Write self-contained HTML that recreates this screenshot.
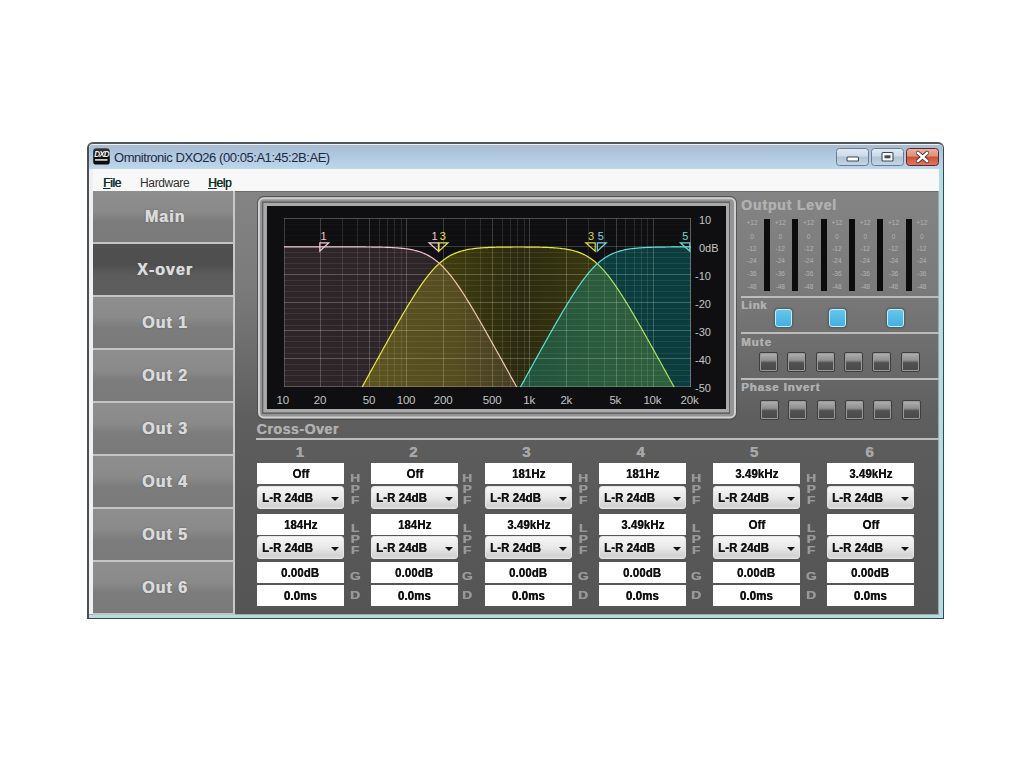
<!DOCTYPE html><html><head><meta charset="utf-8"><style>
*{margin:0;padding:0;box-sizing:border-box}
html,body{width:1024px;height:768px;overflow:hidden;background:#fff;font-family:"Liberation Sans", sans-serif}
.a{position:absolute}
.tab{position:absolute;left:93px;width:142px;height:53px;border-bottom:2px solid #c4c4c4;border-right:2px solid #c8c8c8;
 background:linear-gradient(#8e8e8e 0%,#8a8a8a 40%,#7c7c7c 60%,#7a7a7a 100%);color:#dadada;font-weight:bold;font-size:16px;letter-spacing:1.05px;text-indent:4px;text-align:center;line-height:51px;text-shadow:0.5px 0 0 #dadada,0 0 2px #555}
.tab.sel{background:linear-gradient(#505050 0%,#4e4e4e 40%,#5c5c5c 60%,#5e5e5e 100%);color:#dcdcdc}
.box{position:absolute;width:87px;height:21px;background:#fff;color:#111;font-weight:bold;font-size:12px;text-align:center;line-height:23px}
.box b,.dd b{display:inline-block;transform:scaleX(0.95);letter-spacing:0.12px;font-weight:bold;text-shadow:0.35px 0 0 #151515}
.dd b{transform-origin:0 50%}
.dd{position:absolute;width:87px;height:23px;background:linear-gradient(#f6f6f6,#e8e8e8 50%,#d2d2d2 90%,#dcdcdc);border:1px solid #e6e6e6;border-radius:3px;color:#111;font-weight:bold;font-size:12px;line-height:22px;padding-left:4px}
.dd i{position:absolute;right:4px;top:10px;width:0;height:0;border-left:4.5px solid transparent;border-right:4.5px solid transparent;border-top:4.5px solid #111}
.lt{position:absolute;width:14px;color:#989898;font-weight:bold;font-size:11px;line-height:10.9px;text-align:center;transform:scaleX(1.25);text-shadow:0.4px 0 0 #989898}
.num{position:absolute;width:40px;color:#a8a8a8;font-weight:bold;font-size:15px;text-align:center;text-shadow:0.5px 0 0 #a8a8a8}
.hdr{position:absolute;color:#b0b0b0;font-weight:bold;text-shadow:0.5px 0 0 #b0b0b0}
.sep{position:absolute;height:2px;background:#bcbcbc}
.mb{position:absolute;width:19px;height:20px;border:1px solid #3e3e3e;border-radius:2px;box-shadow:inset 0 0 0 1px #9a9a9a;background:linear-gradient(#b0b0b0,#909090 40%,#505050 55%,#4a4a4a)}
.lb{position:absolute;width:17px;height:18px;border:1.5px solid #c4ecfa;border-radius:3px;background:linear-gradient(#66c6ec,#50b8e4 60%,#44b0e0);box-shadow:0 0 2px 1px #4a5c66}
</style></head><body><div class="a" style="left:87px;top:142px;width:857px;height:477px;border:1px solid #2e4a52;border-left:2px solid #4a5054;border-top:2px solid #50565c;border-radius:6px 6px 0 0;background:#eef2f6"></div><div class="a" style="left:89px;top:145px;width:854px;height:24px;border-radius:4px 4px 0 0;background:linear-gradient(#a8bcd2,#b4cde4 60%,#bcd6ea)"></div><div class="a" style="left:939px;top:169px;width:4px;height:449px;background:#b4dde2"></div><div class="a" style="left:89px;top:615px;width:854px;height:3px;background:#b4dde2"></div><div class="a" style="left:89px;top:169px;width:4px;height:446px;background:#f0f0f0"></div><div class="a" style="left:93px;top:169px;width:846px;height:22px;background:#f9f8f8"></div><svg class="a" style="left:90px;top:146px" width="24" height="22"><defs><linearGradient id="ig" x1="0" y1="0" x2="0" y2="1"><stop offset="0" stop-color="#3a3c3a"/><stop offset="0.35" stop-color="#141414"/><stop offset="1" stop-color="#0a0a0a"/></linearGradient></defs><rect x="3.2" y="2.3" width="16.6" height="16.3" rx="3.2" fill="url(#ig)"/><text x="11.6" y="11.4" fill="#f4f4f4" font-size="8.2" font-weight="bold" font-style="italic" text-anchor="middle" letter-spacing="-0.9" font-family="Liberation Sans, sans-serif">DXD</text><rect x="5" y="13" width="12.5" height="1.8" fill="#e8e8e8" opacity="0.85"/></svg><div class="a" style="left:114px;top:150px;font-size:13px;letter-spacing:-0.45px;color:#1c2844;white-space:nowrap">Omnitronic DXO26 (00:05:A1:45:2B:AE)</div><svg class="a" style="left:830px;top:144px" width="114" height="26">
<defs>
<linearGradient id="bb" x1="0" y1="0" x2="0" y2="1"><stop offset="0" stop-color="#e2ebf4"/><stop offset="0.45" stop-color="#ccdae8"/><stop offset="0.5" stop-color="#afc3d8"/><stop offset="1" stop-color="#c6d6e6"/></linearGradient>
<linearGradient id="bc" x1="0" y1="0" x2="0" y2="1"><stop offset="0" stop-color="#eeb0a0"/><stop offset="0.45" stop-color="#e09078"/><stop offset="0.5" stop-color="#cc5038"/><stop offset="1" stop-color="#e07a60"/></linearGradient>
</defs>
<rect x="6.5" y="4.5" width="32" height="17" rx="3" fill="url(#bb)" stroke="#6c7c8e"/>
<rect x="41.5" y="4.5" width="32" height="17" rx="3" fill="url(#bb)" stroke="#6c7c8e"/>
<rect x="76.5" y="4.5" width="32" height="17" rx="3" fill="url(#bc)" stroke="#5a2a30"/>
<rect x="17" y="13" width="11.5" height="4" rx="1" fill="#fff" stroke="#3c4c5c" stroke-width="1.1"/>
<rect x="52" y="8.5" width="11" height="8.5" rx="1" fill="#fff" stroke="#3c4c5c" stroke-width="1.1"/>
<rect x="54.5" y="11.3" width="6" height="3" fill="#3c4c5c"/>
<path d="M88,9 L97,17 M97,9 L88,17" stroke="#3a2020" stroke-width="4.2" stroke-linecap="round"/>
<path d="M88,9 L97,17 M97,9 L88,17" stroke="#fff" stroke-width="2.6" stroke-linecap="square"/>
</svg><div class="a" style="left:103px;top:176px;font-size:12px;letter-spacing:-0.35px;color:#10302a;text-shadow:0.4px 0 0 #10302a;white-space:nowrap"><span style="text-decoration:underline">F</span>ile</div><div class="a" style="left:140px;top:176px;font-size:12px;letter-spacing:-0.35px;color:#303030;white-space:nowrap">Hardware</div><div class="a" style="left:208px;top:176px;font-size:12px;letter-spacing:-0.35px;color:#10302a;text-shadow:0.4px 0 0 #10302a;white-space:nowrap"><span style="text-decoration:underline">H</span>elp</div><div class="a" style="left:93px;top:191px;width:846px;height:423px;background:linear-gradient(#848484 0%,#7a7a7a 23%,#5e5e5e 54%,#585858 75%,#555 100%);border-top:1px solid #6a6a6a"></div><div class="a" style="left:938px;top:191px;width:1px;height:423px;background:#a4a4a4"></div><div class="a" style="left:89px;top:614px;width:850px;height:1px;background:#a4a8a8"></div><div class="tab" style="top:191px">Main</div><div class="tab sel" style="top:244px">X-over</div><div class="tab" style="top:297px">Out 1</div><div class="tab" style="top:350px">Out 2</div><div class="tab" style="top:403px">Out 3</div><div class="tab" style="top:456px">Out 4</div><div class="tab" style="top:509px">Out 5</div><div class="tab" style="top:562px">Out 6</div><svg class="a" style="left:0;top:0" width="1024" height="768"><rect x="257.5" y="196.5" width="479" height="223" rx="6" fill="none" stroke="#4a4a4a" stroke-opacity="0.8"/><rect x="259" y="198.3" width="476" height="219.2" rx="5" fill="#949494" stroke="#d0d0d0" stroke-width="2"/><rect x="262.75" y="202.25" width="466.5" height="211" fill="none" stroke="#626262" stroke-width="1.5"/><rect x="265" y="204.5" width="462.5" height="206" fill="none" stroke="#aaaaaa" stroke-width="3"/><rect x="267" y="206" width="459" height="203" fill="#0f0f11"/><defs><linearGradient id="gy" gradientUnits="userSpaceOnUse" x1="362" y1="0" x2="675" y2="0"><stop offset="0" stop-color="#e8e000" stop-opacity="0.25"/><stop offset="0.3" stop-color="#e8e000" stop-opacity="0.21"/><stop offset="0.5" stop-color="#e8e000" stop-opacity="0.13"/><stop offset="0.72" stop-color="#e8e000" stop-opacity="0.19"/><stop offset="1" stop-color="#e8e000" stop-opacity="0.22"/></linearGradient><clipPath id="cu"><path d="M284.00,246.88 L285.36,246.88 L286.71,246.88 L288.07,246.88 L289.42,246.88 L290.78,246.88 L292.13,246.88 L293.49,246.88 L294.84,246.88 L296.20,246.88 L297.56,246.88 L298.91,246.88 L300.27,246.88 L301.62,246.88 L302.98,246.88 L304.33,246.88 L305.69,246.88 L307.05,246.88 L308.40,246.88 L309.76,246.88 L311.11,246.88 L312.47,246.88 L313.82,246.88 L315.18,246.88 L316.53,246.88 L317.89,246.88 L319.25,246.88 L320.60,246.88 L321.96,246.88 L323.31,246.88 L324.67,246.88 L326.02,246.88 L327.38,246.89 L328.74,246.89 L330.09,246.89 L331.45,246.89 L332.80,246.89 L334.16,246.89 L335.51,246.89 L336.87,246.89 L338.22,246.89 L339.58,246.89 L340.94,246.90 L342.29,246.90 L343.65,246.90 L345.00,246.90 L346.36,246.90 L347.71,246.90 L349.07,246.91 L350.43,246.91 L351.78,246.91 L353.14,246.92 L354.49,246.92 L355.85,246.93 L357.20,246.93 L358.56,246.94 L359.91,246.94 L361.27,246.95 L362.63,246.96 L363.98,246.96 L365.34,246.97 L366.69,246.98 L368.05,246.99 L369.40,247.01 L370.76,247.02 L372.12,247.03 L373.47,247.05 L374.83,247.07 L376.18,247.09 L377.54,247.11 L378.89,247.14 L380.25,247.16 L381.60,247.19 L382.96,247.23 L384.32,247.26 L385.67,247.30 L387.03,247.35 L388.38,247.40 L389.74,247.45 L391.09,247.51 L392.45,247.58 L393.81,247.65 L395.16,247.73 L396.52,247.82 L397.87,247.92 L399.23,248.03 L400.58,248.14 L401.94,248.28 L403.29,248.42 L404.65,248.58 L406.01,248.75 L407.36,248.94 L408.72,249.15 L410.07,249.38 L411.43,249.64 L412.78,249.91 L414.14,250.22 L415.50,250.55 L416.85,250.91 L418.21,251.30 L419.56,251.73 L420.92,252.19 L422.27,252.69 L423.63,253.24 L424.98,253.83 L426.34,254.47 L427.70,255.15 L429.05,255.89 L430.41,256.68 L431.76,257.53 L433.12,258.43 L434.47,259.39 L435.83,260.41 L437.19,261.50 L438.54,262.64 L439.90,262.93 L441.25,261.77 L442.61,260.68 L443.96,259.64 L445.32,258.66 L446.67,257.74 L448.03,256.88 L449.39,256.08 L450.74,255.33 L452.10,254.63 L453.45,253.98 L454.81,253.38 L456.16,252.83 L457.52,252.31 L458.88,251.84 L460.23,251.40 L461.59,251.00 L462.94,250.63 L464.30,250.30 L465.65,249.99 L467.01,249.70 L468.36,249.45 L469.72,249.21 L471.08,249.00 L472.43,248.80 L473.79,248.62 L475.14,248.46 L476.50,248.31 L477.85,248.18 L479.21,248.06 L480.57,247.95 L481.92,247.85 L483.28,247.76 L484.63,247.67 L485.99,247.60 L487.34,247.53 L488.70,247.47 L490.05,247.42 L491.41,247.37 L492.77,247.32 L494.12,247.28 L495.48,247.25 L496.83,247.21 L498.19,247.18 L499.54,247.16 L500.90,247.13 L502.26,247.11 L503.61,247.10 L504.97,247.08 L506.32,247.07 L507.68,247.05 L509.03,247.04 L510.39,247.03 L511.74,247.03 L513.10,247.02 L514.46,247.02 L515.81,247.01 L517.17,247.01 L518.52,247.01 L519.88,247.01 L521.23,247.01 L522.59,247.02 L523.95,247.02 L525.30,247.03 L526.66,247.04 L528.01,247.05 L529.37,247.06 L530.72,247.07 L532.08,247.09 L533.43,247.11 L534.79,247.13 L536.15,247.15 L537.50,247.17 L538.86,247.20 L540.21,247.23 L541.57,247.27 L542.92,247.31 L544.28,247.35 L545.64,247.40 L546.99,247.45 L548.35,247.51 L549.70,247.57 L551.06,247.64 L552.41,247.72 L553.77,247.81 L555.12,247.91 L556.48,248.01 L557.84,248.13 L559.19,248.26 L560.55,248.40 L561.90,248.56 L563.26,248.73 L564.61,248.92 L565.97,249.12 L567.33,249.35 L568.68,249.60 L570.04,249.87 L571.39,250.17 L572.75,250.50 L574.10,250.85 L575.46,251.24 L576.81,251.66 L578.17,252.12 L579.53,252.62 L580.88,253.16 L582.24,253.74 L583.59,254.37 L584.95,255.05 L586.30,255.78 L587.66,256.56 L589.02,257.40 L590.37,258.29 L591.73,259.25 L593.08,260.26 L594.44,261.34 L595.79,262.47 L597.15,263.67 L598.50,262.69 L599.86,261.54 L601.22,260.46 L602.57,259.43 L603.93,258.47 L605.28,257.56 L606.64,256.71 L607.99,255.92 L609.35,255.18 L610.71,254.49 L612.06,253.86 L613.42,253.26 L614.77,252.72 L616.13,252.21 L617.48,251.75 L618.84,251.32 L620.19,250.92 L621.55,250.56 L622.91,250.23 L624.26,249.93 L625.62,249.65 L626.97,249.39 L628.33,249.16 L629.68,248.95 L631.04,248.76 L632.40,248.58 L633.75,248.43 L635.11,248.28 L636.46,248.15 L637.82,248.03 L639.17,247.92 L640.53,247.82 L641.88,247.73 L643.24,247.65 L644.60,247.58 L645.95,247.51 L647.31,247.45 L648.66,247.40 L650.02,247.35 L651.37,247.30 L652.73,247.26 L654.09,247.23 L655.44,247.19 L656.80,247.16 L658.15,247.14 L659.51,247.11 L660.86,247.09 L662.22,247.07 L663.57,247.05 L664.93,247.03 L666.29,247.02 L667.64,247.01 L669.00,246.99 L670.35,246.98 L671.71,246.97 L673.06,246.96 L674.42,246.96 L675.78,246.95 L677.13,246.94 L678.49,246.94 L679.84,246.93 L681.20,246.93 L682.55,246.92 L683.91,246.92 L685.26,246.91 L686.62,246.91 L687.98,246.91 L689.33,246.91 L690.69,246.90 L691,386.9 L284,386.9 Z"/></clipPath></defs><path d="M284.00,246.88 L285.36,246.88 L286.71,246.88 L288.07,246.88 L289.42,246.88 L290.78,246.88 L292.13,246.88 L293.49,246.88 L294.84,246.88 L296.20,246.88 L297.56,246.88 L298.91,246.88 L300.27,246.88 L301.62,246.88 L302.98,246.88 L304.33,246.88 L305.69,246.88 L307.05,246.88 L308.40,246.88 L309.76,246.88 L311.11,246.88 L312.47,246.88 L313.82,246.88 L315.18,246.88 L316.53,246.88 L317.89,246.88 L319.25,246.88 L320.60,246.88 L321.96,246.88 L323.31,246.88 L324.67,246.88 L326.02,246.88 L327.38,246.89 L328.74,246.89 L330.09,246.89 L331.45,246.89 L332.80,246.89 L334.16,246.89 L335.51,246.89 L336.87,246.89 L338.22,246.89 L339.58,246.89 L340.94,246.90 L342.29,246.90 L343.65,246.90 L345.00,246.90 L346.36,246.90 L347.71,246.90 L349.07,246.91 L350.43,246.91 L351.78,246.91 L353.14,246.92 L354.49,246.92 L355.85,246.93 L357.20,246.93 L358.56,246.94 L359.91,246.94 L361.27,246.95 L362.63,246.96 L363.98,246.96 L365.34,246.97 L366.69,246.98 L368.05,246.99 L369.40,247.01 L370.76,247.02 L372.12,247.03 L373.47,247.05 L374.83,247.07 L376.18,247.09 L377.54,247.11 L378.89,247.14 L380.25,247.16 L381.60,247.19 L382.96,247.23 L384.32,247.26 L385.67,247.30 L387.03,247.35 L388.38,247.40 L389.74,247.45 L391.09,247.51 L392.45,247.58 L393.81,247.65 L395.16,247.73 L396.52,247.82 L397.87,247.92 L399.23,248.03 L400.58,248.14 L401.94,248.28 L403.29,248.42 L404.65,248.58 L406.01,248.75 L407.36,248.94 L408.72,249.15 L410.07,249.38 L411.43,249.64 L412.78,249.91 L414.14,250.22 L415.50,250.55 L416.85,250.91 L418.21,251.30 L419.56,251.73 L420.92,252.19 L422.27,252.69 L423.63,253.24 L424.98,253.83 L426.34,254.47 L427.70,255.15 L429.05,255.89 L430.41,256.68 L431.76,257.53 L433.12,258.43 L434.47,259.39 L435.83,260.41 L437.19,261.50 L438.54,262.64 L439.90,263.85 L441.25,265.12 L442.61,266.45 L443.96,267.85 L445.32,269.30 L446.67,270.82 L448.03,272.40 L449.39,274.03 L450.74,275.71 L452.10,277.45 L453.45,279.25 L454.81,281.09 L456.16,282.97 L457.52,284.90 L458.88,286.88 L460.23,288.89 L461.59,290.94 L462.94,293.02 L464.30,295.13 L465.65,297.28 L467.01,299.45 L468.36,301.65 L469.72,303.87 L471.08,306.11 L472.43,308.38 L473.79,310.66 L475.14,312.96 L476.50,315.27 L477.85,317.60 L479.21,319.94 L480.57,322.30 L481.92,324.66 L483.28,327.04 L484.63,329.42 L485.99,331.81 L487.34,334.21 L488.70,336.62 L490.05,339.03 L491.41,341.45 L492.77,343.87 L494.12,346.30 L495.48,348.73 L496.83,351.17 L498.19,353.61 L499.54,356.05 L500.90,358.49 L502.26,360.94 L503.61,363.39 L504.97,365.84 L506.32,368.30 L507.68,370.75 L509.03,373.21 L510.39,375.67 L511.74,378.13 L513.10,380.59 L514.46,383.05 L515.81,385.51 L516.78,386.90 L516.78,386.9 L284.00,386.9 Z" fill="#f0b0c0" fill-opacity="0.14"/><path d="M284.00,246.88 L285.36,246.88 L286.71,246.88 L288.07,246.88 L289.42,246.88 L290.78,246.88 L292.13,246.88 L293.49,246.88 L294.84,246.88 L296.20,246.88 L297.56,246.88 L298.91,246.88 L300.27,246.88 L301.62,246.88 L302.98,246.88 L304.33,246.88 L305.69,246.88 L307.05,246.88 L308.40,246.88 L309.76,246.88 L311.11,246.88 L312.47,246.88 L313.82,246.88 L315.18,246.88 L316.53,246.88 L317.89,246.88 L319.25,246.88 L320.60,246.88 L321.96,246.88 L323.31,246.88 L324.67,246.88 L326.02,246.88 L327.38,246.89 L328.74,246.89 L330.09,246.89 L331.45,246.89 L332.80,246.89 L334.16,246.89 L335.51,246.89 L336.87,246.89 L338.22,246.89 L339.58,246.89 L340.94,246.90 L342.29,246.90 L343.65,246.90 L345.00,246.90 L346.36,246.90 L347.71,246.90 L349.07,246.91 L350.43,246.91 L351.78,246.91 L353.14,246.92 L354.49,246.92 L355.85,246.93 L357.20,246.93 L358.56,246.94 L359.91,246.94 L361.27,246.95 L362.63,246.96 L363.98,246.96 L365.34,246.97 L366.69,246.98 L368.05,246.99 L369.40,247.01 L370.76,247.02 L372.12,247.03 L373.47,247.05 L374.83,247.07 L376.18,247.09 L377.54,247.11 L378.89,247.14 L380.25,247.16 L381.60,247.19 L382.96,247.23 L384.32,247.26 L385.67,247.30 L387.03,247.35 L388.38,247.40 L389.74,247.45 L391.09,247.51 L392.45,247.58 L393.81,247.65 L395.16,247.73 L396.52,247.82 L397.87,247.92 L399.23,248.03 L400.58,248.14 L401.94,248.28 L403.29,248.42 L404.65,248.58 L406.01,248.75 L407.36,248.94 L408.72,249.15 L410.07,249.38 L411.43,249.64 L412.78,249.91 L414.14,250.22 L415.50,250.55 L416.85,250.91 L418.21,251.30 L419.56,251.73 L420.92,252.19 L422.27,252.69 L423.63,253.24 L424.98,253.83 L426.34,254.47 L427.70,255.15 L429.05,255.89 L430.41,256.68 L431.76,257.53 L433.12,258.43 L434.47,259.39 L435.83,260.41 L437.19,261.50 L438.54,262.64 L439.90,263.85 L441.25,265.12 L442.61,266.45 L443.96,267.85 L445.32,269.30 L446.67,270.82 L448.03,272.40 L449.39,274.03 L450.74,275.71 L452.10,277.45 L453.45,279.25 L454.81,281.09 L456.16,282.97 L457.52,284.90 L458.88,286.88 L460.23,288.89 L461.59,290.94 L462.94,293.02 L464.30,295.13 L465.65,297.28 L467.01,299.45 L468.36,301.65 L469.72,303.87 L471.08,306.11 L472.43,308.38 L473.79,310.66 L475.14,312.96 L476.50,315.27 L477.85,317.60 L479.21,319.94 L480.57,322.30 L481.92,324.66 L483.28,327.04 L484.63,329.42 L485.99,331.81 L487.34,334.21 L488.70,336.62 L490.05,339.03 L491.41,341.45 L492.77,343.87 L494.12,346.30 L495.48,348.73 L496.83,351.17 L498.19,353.61 L499.54,356.05 L500.90,358.49 L502.26,360.94 L503.61,363.39 L504.97,365.84 L506.32,368.30 L507.68,370.75 L509.03,373.21 L510.39,375.67 L511.74,378.13 L513.10,380.59 L514.46,383.05 L515.81,385.51 L516.78,386.90" fill="none" stroke="#f4c0cc" stroke-width="1.2"/><path d="M361.99,386.90 L362.63,386.12 L363.98,383.66 L365.34,381.20 L366.69,378.73 L368.05,376.27 L369.40,373.82 L370.76,371.36 L372.12,368.90 L373.47,366.45 L374.83,363.99 L376.18,361.54 L377.54,359.10 L378.89,356.65 L380.25,354.21 L381.60,351.77 L382.96,349.33 L384.32,346.90 L385.67,344.47 L387.03,342.05 L388.38,339.63 L389.74,337.21 L391.09,334.80 L392.45,332.40 L393.81,330.01 L395.16,327.62 L396.52,325.25 L397.87,322.88 L399.23,320.52 L400.58,318.18 L401.94,315.84 L403.29,313.53 L404.65,311.22 L406.01,308.94 L407.36,306.67 L408.72,304.42 L410.07,302.19 L411.43,299.99 L412.78,297.81 L414.14,295.66 L415.50,293.54 L416.85,291.45 L418.21,289.39 L419.56,287.37 L420.92,285.39 L422.27,283.44 L423.63,281.55 L424.98,279.69 L426.34,277.89 L427.70,276.14 L429.05,274.44 L430.41,272.79 L431.76,271.20 L433.12,269.67 L434.47,268.20 L435.83,266.79 L437.19,265.44 L438.54,264.16 L439.90,262.93 L441.25,261.77 L442.61,260.68 L443.96,259.64 L445.32,258.66 L446.67,257.74 L448.03,256.88 L449.39,256.08 L450.74,255.33 L452.10,254.63 L453.45,253.98 L454.81,253.38 L456.16,252.83 L457.52,252.31 L458.88,251.84 L460.23,251.40 L461.59,251.00 L462.94,250.63 L464.30,250.30 L465.65,249.99 L467.01,249.70 L468.36,249.45 L469.72,249.21 L471.08,249.00 L472.43,248.80 L473.79,248.62 L475.14,248.46 L476.50,248.31 L477.85,248.18 L479.21,248.06 L480.57,247.95 L481.92,247.85 L483.28,247.76 L484.63,247.67 L485.99,247.60 L487.34,247.53 L488.70,247.47 L490.05,247.42 L491.41,247.37 L492.77,247.32 L494.12,247.28 L495.48,247.25 L496.83,247.21 L498.19,247.18 L499.54,247.16 L500.90,247.13 L502.26,247.11 L503.61,247.10 L504.97,247.08 L506.32,247.07 L507.68,247.05 L509.03,247.04 L510.39,247.03 L511.74,247.03 L513.10,247.02 L514.46,247.02 L515.81,247.01 L517.17,247.01 L518.52,247.01 L519.88,247.01 L521.23,247.01 L522.59,247.02 L523.95,247.02 L525.30,247.03 L526.66,247.04 L528.01,247.05 L529.37,247.06 L530.72,247.07 L532.08,247.09 L533.43,247.11 L534.79,247.13 L536.15,247.15 L537.50,247.17 L538.86,247.20 L540.21,247.23 L541.57,247.27 L542.92,247.31 L544.28,247.35 L545.64,247.40 L546.99,247.45 L548.35,247.51 L549.70,247.57 L551.06,247.64 L552.41,247.72 L553.77,247.81 L555.12,247.91 L556.48,248.01 L557.84,248.13 L559.19,248.26 L560.55,248.40 L561.90,248.56 L563.26,248.73 L564.61,248.92 L565.97,249.12 L567.33,249.35 L568.68,249.60 L570.04,249.87 L571.39,250.17 L572.75,250.50 L574.10,250.85 L575.46,251.24 L576.81,251.66 L578.17,252.12 L579.53,252.62 L580.88,253.16 L582.24,253.74 L583.59,254.37 L584.95,255.05 L586.30,255.78 L587.66,256.56 L589.02,257.40 L590.37,258.29 L591.73,259.25 L593.08,260.26 L594.44,261.34 L595.79,262.47 L597.15,263.67 L598.50,264.93 L599.86,266.26 L601.22,267.64 L602.57,269.09 L603.93,270.60 L605.28,272.16 L606.64,273.79 L607.99,275.46 L609.35,277.20 L610.71,278.98 L612.06,280.81 L613.42,282.69 L614.77,284.62 L616.13,286.58 L617.48,288.59 L618.84,290.63 L620.19,292.71 L621.55,294.82 L622.91,296.96 L624.26,299.13 L625.62,301.32 L626.97,303.54 L628.33,305.78 L629.68,308.04 L631.04,310.32 L632.40,312.62 L633.75,314.93 L635.11,317.26 L636.46,319.60 L637.82,321.95 L639.17,324.32 L640.53,326.69 L641.88,329.07 L643.24,331.46 L644.60,333.86 L645.95,336.27 L647.31,338.68 L648.66,341.09 L650.02,343.52 L651.37,345.94 L652.73,348.38 L654.09,350.81 L655.44,353.25 L656.80,355.69 L658.15,358.14 L659.51,360.58 L660.86,363.03 L662.22,365.48 L663.57,367.94 L664.93,370.39 L666.29,372.85 L667.64,375.31 L669.00,377.77 L670.35,380.23 L671.71,382.69 L673.06,385.15 L674.23,386.90 L674.23,386.9 L361.99,386.9 Z" fill="url(#gy)"/><path d="M361.99,386.90 L362.63,386.12 L363.98,383.66 L365.34,381.20 L366.69,378.73 L368.05,376.27 L369.40,373.82 L370.76,371.36 L372.12,368.90 L373.47,366.45 L374.83,363.99 L376.18,361.54 L377.54,359.10 L378.89,356.65 L380.25,354.21 L381.60,351.77 L382.96,349.33 L384.32,346.90 L385.67,344.47 L387.03,342.05 L388.38,339.63 L389.74,337.21 L391.09,334.80 L392.45,332.40 L393.81,330.01 L395.16,327.62 L396.52,325.25 L397.87,322.88 L399.23,320.52 L400.58,318.18 L401.94,315.84 L403.29,313.53 L404.65,311.22 L406.01,308.94 L407.36,306.67 L408.72,304.42 L410.07,302.19 L411.43,299.99 L412.78,297.81 L414.14,295.66 L415.50,293.54 L416.85,291.45 L418.21,289.39 L419.56,287.37 L420.92,285.39 L422.27,283.44 L423.63,281.55 L424.98,279.69 L426.34,277.89 L427.70,276.14 L429.05,274.44 L430.41,272.79 L431.76,271.20 L433.12,269.67 L434.47,268.20 L435.83,266.79 L437.19,265.44 L438.54,264.16 L439.90,262.93 L441.25,261.77 L442.61,260.68 L443.96,259.64 L445.32,258.66 L446.67,257.74 L448.03,256.88 L449.39,256.08 L450.74,255.33 L452.10,254.63 L453.45,253.98 L454.81,253.38 L456.16,252.83 L457.52,252.31 L458.88,251.84 L460.23,251.40 L461.59,251.00 L462.94,250.63 L464.30,250.30 L465.65,249.99 L467.01,249.70 L468.36,249.45 L469.72,249.21 L471.08,249.00 L472.43,248.80 L473.79,248.62 L475.14,248.46 L476.50,248.31 L477.85,248.18 L479.21,248.06 L480.57,247.95 L481.92,247.85 L483.28,247.76 L484.63,247.67 L485.99,247.60 L487.34,247.53 L488.70,247.47 L490.05,247.42 L491.41,247.37 L492.77,247.32 L494.12,247.28 L495.48,247.25 L496.83,247.21 L498.19,247.18 L499.54,247.16 L500.90,247.13 L502.26,247.11 L503.61,247.10 L504.97,247.08 L506.32,247.07 L507.68,247.05 L509.03,247.04 L510.39,247.03 L511.74,247.03 L513.10,247.02 L514.46,247.02 L515.81,247.01 L517.17,247.01 L518.52,247.01 L519.88,247.01 L521.23,247.01 L522.59,247.02 L523.95,247.02 L525.30,247.03 L526.66,247.04 L528.01,247.05 L529.37,247.06 L530.72,247.07 L532.08,247.09 L533.43,247.11 L534.79,247.13 L536.15,247.15 L537.50,247.17 L538.86,247.20 L540.21,247.23 L541.57,247.27 L542.92,247.31 L544.28,247.35 L545.64,247.40 L546.99,247.45 L548.35,247.51 L549.70,247.57 L551.06,247.64 L552.41,247.72 L553.77,247.81 L555.12,247.91 L556.48,248.01 L557.84,248.13 L559.19,248.26 L560.55,248.40 L561.90,248.56 L563.26,248.73 L564.61,248.92 L565.97,249.12 L567.33,249.35 L568.68,249.60 L570.04,249.87 L571.39,250.17 L572.75,250.50 L574.10,250.85 L575.46,251.24 L576.81,251.66 L578.17,252.12 L579.53,252.62 L580.88,253.16 L582.24,253.74 L583.59,254.37 L584.95,255.05 L586.30,255.78 L587.66,256.56 L589.02,257.40 L590.37,258.29 L591.73,259.25 L593.08,260.26 L594.44,261.34 L595.79,262.47 L597.15,263.67 L598.50,264.93 L599.86,266.26 L601.22,267.64 L602.57,269.09 L603.93,270.60 L605.28,272.16 L606.64,273.79 L607.99,275.46 L609.35,277.20 L610.71,278.98 L612.06,280.81 L613.42,282.69 L614.77,284.62 L616.13,286.58 L617.48,288.59 L618.84,290.63 L620.19,292.71 L621.55,294.82 L622.91,296.96 L624.26,299.13 L625.62,301.32 L626.97,303.54 L628.33,305.78 L629.68,308.04 L631.04,310.32 L632.40,312.62 L633.75,314.93 L635.11,317.26 L636.46,319.60 L637.82,321.95 L639.17,324.32 L640.53,326.69 L641.88,329.07 L643.24,331.46 L644.60,333.86 L645.95,336.27 L647.31,338.68 L648.66,341.09 L650.02,343.52 L651.37,345.94 L652.73,348.38 L654.09,350.81 L655.44,353.25 L656.80,355.69 L658.15,358.14 L659.51,360.58 L660.86,363.03 L662.22,365.48 L663.57,367.94 L664.93,370.39 L666.29,372.85 L667.64,375.31 L669.00,377.77 L670.35,380.23 L671.71,382.69 L673.06,385.15 L674.23,386.90" fill="none" stroke="#e8e838" stroke-width="1.2"/><path d="M520.32,386.90 L521.23,385.62 L522.59,383.15 L523.95,380.69 L525.30,378.23 L526.66,375.77 L528.01,373.31 L529.37,370.85 L530.72,368.40 L532.08,365.94 L533.43,363.49 L534.79,361.04 L536.15,358.59 L537.50,356.15 L538.86,353.71 L540.21,351.27 L541.57,348.83 L542.92,346.40 L544.28,343.97 L545.64,341.55 L546.99,339.13 L548.35,336.72 L549.70,334.31 L551.06,331.91 L552.41,329.52 L553.77,327.14 L555.12,324.76 L556.48,322.39 L557.84,320.04 L559.19,317.70 L560.55,315.37 L561.90,313.05 L563.26,310.75 L564.61,308.47 L565.97,306.21 L567.33,303.96 L568.68,301.74 L570.04,299.54 L571.39,297.37 L572.75,295.22 L574.10,293.10 L575.46,291.02 L576.81,288.97 L578.17,286.96 L579.53,284.98 L580.88,283.05 L582.24,281.16 L583.59,279.32 L584.95,277.53 L586.30,275.79 L587.66,274.10 L589.02,272.46 L590.37,270.88 L591.73,269.37 L593.08,267.91 L594.44,266.51 L595.79,265.18 L597.15,263.90 L598.50,262.69 L599.86,261.54 L601.22,260.46 L602.57,259.43 L603.93,258.47 L605.28,257.56 L606.64,256.71 L607.99,255.92 L609.35,255.18 L610.71,254.49 L612.06,253.86 L613.42,253.26 L614.77,252.72 L616.13,252.21 L617.48,251.75 L618.84,251.32 L620.19,250.92 L621.55,250.56 L622.91,250.23 L624.26,249.93 L625.62,249.65 L626.97,249.39 L628.33,249.16 L629.68,248.95 L631.04,248.76 L632.40,248.58 L633.75,248.43 L635.11,248.28 L636.46,248.15 L637.82,248.03 L639.17,247.92 L640.53,247.82 L641.88,247.73 L643.24,247.65 L644.60,247.58 L645.95,247.51 L647.31,247.45 L648.66,247.40 L650.02,247.35 L651.37,247.30 L652.73,247.26 L654.09,247.23 L655.44,247.19 L656.80,247.16 L658.15,247.14 L659.51,247.11 L660.86,247.09 L662.22,247.07 L663.57,247.05 L664.93,247.03 L666.29,247.02 L667.64,247.01 L669.00,246.99 L670.35,246.98 L671.71,246.97 L673.06,246.96 L674.42,246.96 L675.78,246.95 L677.13,246.94 L678.49,246.94 L679.84,246.93 L681.20,246.93 L682.55,246.92 L683.91,246.92 L685.26,246.91 L686.62,246.91 L687.98,246.91 L689.33,246.91 L690.69,246.90 L690.69,386.9 L520.32,386.9 Z" fill="#00c8c8" fill-opacity="0.25"/><path d="M520.32,386.90 L521.23,385.62 L522.59,383.15 L523.95,380.69 L525.30,378.23 L526.66,375.77 L528.01,373.31 L529.37,370.85 L530.72,368.40 L532.08,365.94 L533.43,363.49 L534.79,361.04 L536.15,358.59 L537.50,356.15 L538.86,353.71 L540.21,351.27 L541.57,348.83 L542.92,346.40 L544.28,343.97 L545.64,341.55 L546.99,339.13 L548.35,336.72 L549.70,334.31 L551.06,331.91 L552.41,329.52 L553.77,327.14 L555.12,324.76 L556.48,322.39 L557.84,320.04 L559.19,317.70 L560.55,315.37 L561.90,313.05 L563.26,310.75 L564.61,308.47 L565.97,306.21 L567.33,303.96 L568.68,301.74 L570.04,299.54 L571.39,297.37 L572.75,295.22 L574.10,293.10 L575.46,291.02 L576.81,288.97 L578.17,286.96 L579.53,284.98 L580.88,283.05 L582.24,281.16 L583.59,279.32 L584.95,277.53 L586.30,275.79 L587.66,274.10 L589.02,272.46 L590.37,270.88 L591.73,269.37 L593.08,267.91 L594.44,266.51 L595.79,265.18 L597.15,263.90 L598.50,262.69 L599.86,261.54 L601.22,260.46 L602.57,259.43 L603.93,258.47 L605.28,257.56 L606.64,256.71 L607.99,255.92 L609.35,255.18 L610.71,254.49 L612.06,253.86 L613.42,253.26 L614.77,252.72 L616.13,252.21 L617.48,251.75 L618.84,251.32 L620.19,250.92 L621.55,250.56 L622.91,250.23 L624.26,249.93 L625.62,249.65 L626.97,249.39 L628.33,249.16 L629.68,248.95 L631.04,248.76 L632.40,248.58 L633.75,248.43 L635.11,248.28 L636.46,248.15 L637.82,248.03 L639.17,247.92 L640.53,247.82 L641.88,247.73 L643.24,247.65 L644.60,247.58 L645.95,247.51 L647.31,247.45 L648.66,247.40 L650.02,247.35 L651.37,247.30 L652.73,247.26 L654.09,247.23 L655.44,247.19 L656.80,247.16 L658.15,247.14 L659.51,247.11 L660.86,247.09 L662.22,247.07 L663.57,247.05 L664.93,247.03 L666.29,247.02 L667.64,247.01 L669.00,246.99 L670.35,246.98 L671.71,246.97 L673.06,246.96 L674.42,246.96 L675.78,246.95 L677.13,246.94 L678.49,246.94 L679.84,246.93 L681.20,246.93 L682.55,246.92 L683.91,246.92 L685.26,246.91 L686.62,246.91 L687.98,246.91 L689.33,246.91 L690.69,246.90" fill="none" stroke="#58e0d8" stroke-width="1.2"/><g><line x1="284.5" y1="218.4" x2="284.5" y2="386.9" stroke="#fff" stroke-opacity="0.19"/><line x1="320.5" y1="218.4" x2="320.5" y2="386.9" stroke="#fff" stroke-opacity="0.19"/><line x1="342.5" y1="218.4" x2="342.5" y2="386.9" stroke="#fff" stroke-opacity="0.11"/><line x1="357.5" y1="218.4" x2="357.5" y2="386.9" stroke="#fff" stroke-opacity="0.11"/><line x1="369.5" y1="218.4" x2="369.5" y2="386.9" stroke="#fff" stroke-opacity="0.19"/><line x1="379.5" y1="218.4" x2="379.5" y2="386.9" stroke="#fff" stroke-opacity="0.11"/><line x1="387.5" y1="218.4" x2="387.5" y2="386.9" stroke="#fff" stroke-opacity="0.11"/><line x1="394.5" y1="218.4" x2="394.5" y2="386.9" stroke="#fff" stroke-opacity="0.11"/><line x1="401.5" y1="218.4" x2="401.5" y2="386.9" stroke="#fff" stroke-opacity="0.11"/><line x1="406.5" y1="218.4" x2="406.5" y2="386.9" stroke="#fff" stroke-opacity="0.19"/><line x1="443.5" y1="218.4" x2="443.5" y2="386.9" stroke="#fff" stroke-opacity="0.19"/><line x1="465.5" y1="218.4" x2="465.5" y2="386.9" stroke="#fff" stroke-opacity="0.11"/><line x1="480.5" y1="218.4" x2="480.5" y2="386.9" stroke="#fff" stroke-opacity="0.11"/><line x1="492.5" y1="218.4" x2="492.5" y2="386.9" stroke="#fff" stroke-opacity="0.19"/><line x1="502.5" y1="218.4" x2="502.5" y2="386.9" stroke="#fff" stroke-opacity="0.11"/><line x1="510.5" y1="218.4" x2="510.5" y2="386.9" stroke="#fff" stroke-opacity="0.11"/><line x1="517.5" y1="218.4" x2="517.5" y2="386.9" stroke="#fff" stroke-opacity="0.11"/><line x1="524.5" y1="218.4" x2="524.5" y2="386.9" stroke="#fff" stroke-opacity="0.11"/><line x1="529.5" y1="218.4" x2="529.5" y2="386.9" stroke="#fff" stroke-opacity="0.19"/><line x1="566.5" y1="218.4" x2="566.5" y2="386.9" stroke="#fff" stroke-opacity="0.19"/><line x1="588.5" y1="218.4" x2="588.5" y2="386.9" stroke="#fff" stroke-opacity="0.11"/><line x1="604.5" y1="218.4" x2="604.5" y2="386.9" stroke="#fff" stroke-opacity="0.11"/><line x1="616.5" y1="218.4" x2="616.5" y2="386.9" stroke="#fff" stroke-opacity="0.19"/><line x1="625.5" y1="218.4" x2="625.5" y2="386.9" stroke="#fff" stroke-opacity="0.11"/><line x1="634.5" y1="218.4" x2="634.5" y2="386.9" stroke="#fff" stroke-opacity="0.11"/><line x1="641.5" y1="218.4" x2="641.5" y2="386.9" stroke="#fff" stroke-opacity="0.11"/><line x1="647.5" y1="218.4" x2="647.5" y2="386.9" stroke="#fff" stroke-opacity="0.11"/><line x1="653.5" y1="218.4" x2="653.5" y2="386.9" stroke="#fff" stroke-opacity="0.19"/><line x1="690.5" y1="218.4" x2="690.5" y2="386.9" stroke="#fff" stroke-opacity="0.19"/><line x1="690.5" y1="218.4" x2="690.5" y2="386.9" stroke="#fff" stroke-opacity="0.19"/><line x1="284" y1="218.5" x2="691" y2="218.5" stroke="#fff" stroke-opacity="0.26"/><line x1="284" y1="224.5" x2="691" y2="224.5" stroke="#fff" stroke-opacity="0.025"/><line x1="284" y1="229.5" x2="691" y2="229.5" stroke="#fff" stroke-opacity="0.025"/><line x1="284" y1="235.5" x2="691" y2="235.5" stroke="#fff" stroke-opacity="0.025"/><line x1="284" y1="240.5" x2="691" y2="240.5" stroke="#fff" stroke-opacity="0.025"/><line x1="284" y1="246.5" x2="691" y2="246.5" stroke="#fff" stroke-opacity="0.19"/><line x1="284" y1="252.5" x2="691" y2="252.5" stroke="#fff" stroke-opacity="0.025"/><line x1="284" y1="257.5" x2="691" y2="257.5" stroke="#fff" stroke-opacity="0.025"/><line x1="284" y1="263.5" x2="691" y2="263.5" stroke="#fff" stroke-opacity="0.025"/><line x1="284" y1="268.5" x2="691" y2="268.5" stroke="#fff" stroke-opacity="0.025"/><line x1="284" y1="274.5" x2="691" y2="274.5" stroke="#fff" stroke-opacity="0.19"/><line x1="284" y1="280.5" x2="691" y2="280.5" stroke="#fff" stroke-opacity="0.025"/><line x1="284" y1="285.5" x2="691" y2="285.5" stroke="#fff" stroke-opacity="0.025"/><line x1="284" y1="291.5" x2="691" y2="291.5" stroke="#fff" stroke-opacity="0.025"/><line x1="284" y1="297.5" x2="691" y2="297.5" stroke="#fff" stroke-opacity="0.025"/><line x1="284" y1="302.5" x2="691" y2="302.5" stroke="#fff" stroke-opacity="0.19"/><line x1="284" y1="308.5" x2="691" y2="308.5" stroke="#fff" stroke-opacity="0.025"/><line x1="284" y1="313.5" x2="691" y2="313.5" stroke="#fff" stroke-opacity="0.025"/><line x1="284" y1="319.5" x2="691" y2="319.5" stroke="#fff" stroke-opacity="0.025"/><line x1="284" y1="325.5" x2="691" y2="325.5" stroke="#fff" stroke-opacity="0.025"/><line x1="284" y1="330.5" x2="691" y2="330.5" stroke="#fff" stroke-opacity="0.19"/><line x1="284" y1="336.5" x2="691" y2="336.5" stroke="#fff" stroke-opacity="0.025"/><line x1="284" y1="341.5" x2="691" y2="341.5" stroke="#fff" stroke-opacity="0.025"/><line x1="284" y1="347.5" x2="691" y2="347.5" stroke="#fff" stroke-opacity="0.025"/><line x1="284" y1="353.5" x2="691" y2="353.5" stroke="#fff" stroke-opacity="0.025"/><line x1="284" y1="358.5" x2="691" y2="358.5" stroke="#fff" stroke-opacity="0.19"/><line x1="284" y1="364.5" x2="691" y2="364.5" stroke="#fff" stroke-opacity="0.025"/><line x1="284" y1="370.5" x2="691" y2="370.5" stroke="#fff" stroke-opacity="0.025"/><line x1="284" y1="375.5" x2="691" y2="375.5" stroke="#fff" stroke-opacity="0.025"/><line x1="284" y1="381.5" x2="691" y2="381.5" stroke="#fff" stroke-opacity="0.025"/><line x1="284" y1="386.5" x2="691" y2="386.5" stroke="#fff" stroke-opacity="0.19"/></g><g clip-path="url(#cu)"><line x1="284.5" y1="218.4" x2="284.5" y2="386.9" stroke="#fff" stroke-opacity="0.02"/><line x1="320.5" y1="218.4" x2="320.5" y2="386.9" stroke="#fff" stroke-opacity="0.02"/><line x1="369.5" y1="218.4" x2="369.5" y2="386.9" stroke="#fff" stroke-opacity="0.02"/><line x1="406.5" y1="218.4" x2="406.5" y2="386.9" stroke="#fff" stroke-opacity="0.02"/><line x1="443.5" y1="218.4" x2="443.5" y2="386.9" stroke="#fff" stroke-opacity="0.02"/><line x1="492.5" y1="218.4" x2="492.5" y2="386.9" stroke="#fff" stroke-opacity="0.02"/><line x1="529.5" y1="218.4" x2="529.5" y2="386.9" stroke="#fff" stroke-opacity="0.02"/><line x1="566.5" y1="218.4" x2="566.5" y2="386.9" stroke="#fff" stroke-opacity="0.02"/><line x1="616.5" y1="218.4" x2="616.5" y2="386.9" stroke="#fff" stroke-opacity="0.02"/><line x1="653.5" y1="218.4" x2="653.5" y2="386.9" stroke="#fff" stroke-opacity="0.02"/><line x1="690.5" y1="218.4" x2="690.5" y2="386.9" stroke="#fff" stroke-opacity="0.02"/><line x1="690.5" y1="218.4" x2="690.5" y2="386.9" stroke="#fff" stroke-opacity="0.02"/><line x1="284" y1="218.5" x2="691" y2="218.5" stroke="#fff" stroke-opacity="0.05"/><line x1="284" y1="224.5" x2="691" y2="224.5" stroke="#fff" stroke-opacity="0.06"/><line x1="284" y1="229.5" x2="691" y2="229.5" stroke="#fff" stroke-opacity="0.06"/><line x1="284" y1="235.5" x2="691" y2="235.5" stroke="#fff" stroke-opacity="0.06"/><line x1="284" y1="240.5" x2="691" y2="240.5" stroke="#fff" stroke-opacity="0.06"/><line x1="284" y1="246.5" x2="691" y2="246.5" stroke="#fff" stroke-opacity="0.05"/><line x1="284" y1="252.5" x2="691" y2="252.5" stroke="#fff" stroke-opacity="0.06"/><line x1="284" y1="257.5" x2="691" y2="257.5" stroke="#fff" stroke-opacity="0.06"/><line x1="284" y1="263.5" x2="691" y2="263.5" stroke="#fff" stroke-opacity="0.06"/><line x1="284" y1="268.5" x2="691" y2="268.5" stroke="#fff" stroke-opacity="0.06"/><line x1="284" y1="274.5" x2="691" y2="274.5" stroke="#fff" stroke-opacity="0.05"/><line x1="284" y1="280.5" x2="691" y2="280.5" stroke="#fff" stroke-opacity="0.06"/><line x1="284" y1="285.5" x2="691" y2="285.5" stroke="#fff" stroke-opacity="0.06"/><line x1="284" y1="291.5" x2="691" y2="291.5" stroke="#fff" stroke-opacity="0.06"/><line x1="284" y1="297.5" x2="691" y2="297.5" stroke="#fff" stroke-opacity="0.06"/><line x1="284" y1="302.5" x2="691" y2="302.5" stroke="#fff" stroke-opacity="0.05"/><line x1="284" y1="308.5" x2="691" y2="308.5" stroke="#fff" stroke-opacity="0.06"/><line x1="284" y1="313.5" x2="691" y2="313.5" stroke="#fff" stroke-opacity="0.06"/><line x1="284" y1="319.5" x2="691" y2="319.5" stroke="#fff" stroke-opacity="0.06"/><line x1="284" y1="325.5" x2="691" y2="325.5" stroke="#fff" stroke-opacity="0.06"/><line x1="284" y1="330.5" x2="691" y2="330.5" stroke="#fff" stroke-opacity="0.05"/><line x1="284" y1="336.5" x2="691" y2="336.5" stroke="#fff" stroke-opacity="0.06"/><line x1="284" y1="341.5" x2="691" y2="341.5" stroke="#fff" stroke-opacity="0.06"/><line x1="284" y1="347.5" x2="691" y2="347.5" stroke="#fff" stroke-opacity="0.06"/><line x1="284" y1="353.5" x2="691" y2="353.5" stroke="#fff" stroke-opacity="0.06"/><line x1="284" y1="358.5" x2="691" y2="358.5" stroke="#fff" stroke-opacity="0.05"/><line x1="284" y1="364.5" x2="691" y2="364.5" stroke="#fff" stroke-opacity="0.06"/><line x1="284" y1="370.5" x2="691" y2="370.5" stroke="#fff" stroke-opacity="0.06"/><line x1="284" y1="375.5" x2="691" y2="375.5" stroke="#fff" stroke-opacity="0.06"/><line x1="284" y1="381.5" x2="691" y2="381.5" stroke="#fff" stroke-opacity="0.06"/><line x1="284" y1="386.5" x2="691" y2="386.5" stroke="#fff" stroke-opacity="0.05"/></g><path d="M319.8,251.2 L319.8,242.8 L328.8,242.8 Z" fill="none" stroke="#f0c8d0" stroke-width="1.2" stroke-linejoin="miter"/><text x="323.5" y="240" fill="#f0c8d0" font-size="11" text-anchor="middle" font-family="Liberation Sans, sans-serif">1</text><path d="M438.4,251.2 L438.4,242.8 L429.0,242.8 Z" fill="none" stroke="#f0c8d0" stroke-width="1.2" stroke-linejoin="miter"/><text x="434.6" y="240" fill="#f0c8d0" font-size="11" text-anchor="middle" font-family="Liberation Sans, sans-serif">1</text><path d="M439.0,251.2 L439.0,242.8 L448.0,242.8 Z" fill="none" stroke="#e8e040" stroke-width="1.2" stroke-linejoin="miter"/><text x="442.7" y="240" fill="#e8e040" font-size="11" text-anchor="middle" font-family="Liberation Sans, sans-serif">3</text><path d="M595.2,251.2 L595.2,242.8 L585.8000000000001,242.8 Z" fill="none" stroke="#e0d840" stroke-width="1.2" stroke-linejoin="miter"/><text x="591.1" y="240" fill="#e0d840" font-size="11" text-anchor="middle" font-family="Liberation Sans, sans-serif">3</text><path d="M597.3,251.2 L597.3,242.8 L606.3,242.8 Z" fill="none" stroke="#70d8e8" stroke-width="1.2" stroke-linejoin="miter"/><text x="600.9" y="240" fill="#70d8e8" font-size="11" text-anchor="middle" font-family="Liberation Sans, sans-serif">5</text><path d="M689.8,251.2 L689.8,242.8 L680.4,242.8 Z" fill="none" stroke="#70d8d8" stroke-width="1.2" stroke-linejoin="miter"/><text x="685.3" y="240" fill="#70d8d8" font-size="11" text-anchor="middle" font-family="Liberation Sans, sans-serif">5</text><text x="282.8" y="403.5" fill="#c4c4c4" font-size="11.5" letter-spacing="-0.2" text-anchor="middle" font-family="Liberation Sans, sans-serif">10</text><text x="319.9" y="403.5" fill="#c4c4c4" font-size="11.5" letter-spacing="-0.2" text-anchor="middle" font-family="Liberation Sans, sans-serif">20</text><text x="368.9" y="403.5" fill="#c4c4c4" font-size="11.5" letter-spacing="-0.2" text-anchor="middle" font-family="Liberation Sans, sans-serif">50</text><text x="406.0" y="403.5" fill="#c4c4c4" font-size="11.5" letter-spacing="-0.2" text-anchor="middle" font-family="Liberation Sans, sans-serif">100</text><text x="443.1" y="403.5" fill="#c4c4c4" font-size="11.5" letter-spacing="-0.2" text-anchor="middle" font-family="Liberation Sans, sans-serif">200</text><text x="492.1" y="403.5" fill="#c4c4c4" font-size="11.5" letter-spacing="-0.2" text-anchor="middle" font-family="Liberation Sans, sans-serif">500</text><text x="529.2" y="403.5" fill="#c4c4c4" font-size="11.5" letter-spacing="-0.2" text-anchor="middle" font-family="Liberation Sans, sans-serif">1k</text><text x="566.3" y="403.5" fill="#c4c4c4" font-size="11.5" letter-spacing="-0.2" text-anchor="middle" font-family="Liberation Sans, sans-serif">2k</text><text x="615.3" y="403.5" fill="#c4c4c4" font-size="11.5" letter-spacing="-0.2" text-anchor="middle" font-family="Liberation Sans, sans-serif">5k</text><text x="652.4" y="403.5" fill="#c4c4c4" font-size="11.5" letter-spacing="-0.2" text-anchor="middle" font-family="Liberation Sans, sans-serif">10k</text><text x="689.5" y="403.5" fill="#c4c4c4" font-size="11.5" letter-spacing="-0.2" text-anchor="middle" font-family="Liberation Sans, sans-serif">20k</text><text x="699" y="223.6" fill="#c4c4c4" font-size="11" font-family="Liberation Sans, sans-serif">10</text><text x="699" y="251.7" fill="#c4c4c4" font-size="11" font-family="Liberation Sans, sans-serif">0dB</text><text x="695" y="279.8" fill="#c4c4c4" font-size="11" font-family="Liberation Sans, sans-serif">-10</text><text x="695" y="307.8" fill="#c4c4c4" font-size="11" font-family="Liberation Sans, sans-serif">-20</text><text x="695" y="335.9" fill="#c4c4c4" font-size="11" font-family="Liberation Sans, sans-serif">-30</text><text x="695" y="364.0" fill="#c4c4c4" font-size="11" font-family="Liberation Sans, sans-serif">-40</text><text x="695" y="392.1" fill="#c4c4c4" font-size="11" font-family="Liberation Sans, sans-serif">-50</text></svg><div class="hdr" style="left:741px;top:197px;font-size:14px;letter-spacing:0.85px">Output Level</div><div class="a" style="left:742.0px;top:218.5px;width:20px;text-align:center;font-size:6.5px;line-height:8px;color:#b4b4b4">+12</div><div class="a" style="left:742.0px;top:233.0px;width:20px;text-align:center;font-size:6.5px;line-height:8px;color:#b4b4b4">0</div><div class="a" style="left:742.0px;top:245.0px;width:20px;text-align:center;font-size:6.5px;line-height:8px;color:#b4b4b4">-12</div><div class="a" style="left:742.0px;top:257.0px;width:20px;text-align:center;font-size:6.5px;line-height:8px;color:#b4b4b4">-24</div><div class="a" style="left:742.0px;top:269.5px;width:20px;text-align:center;font-size:6.5px;line-height:8px;color:#b4b4b4">-36</div><div class="a" style="left:742.0px;top:283.0px;width:20px;text-align:center;font-size:6.5px;line-height:8px;color:#b4b4b4">-48</div><div class="a" style="left:770.3px;top:218.5px;width:20px;text-align:center;font-size:6.5px;line-height:8px;color:#b4b4b4">+12</div><div class="a" style="left:770.3px;top:233.0px;width:20px;text-align:center;font-size:6.5px;line-height:8px;color:#b4b4b4">0</div><div class="a" style="left:770.3px;top:245.0px;width:20px;text-align:center;font-size:6.5px;line-height:8px;color:#b4b4b4">-12</div><div class="a" style="left:770.3px;top:257.0px;width:20px;text-align:center;font-size:6.5px;line-height:8px;color:#b4b4b4">-24</div><div class="a" style="left:770.3px;top:269.5px;width:20px;text-align:center;font-size:6.5px;line-height:8px;color:#b4b4b4">-36</div><div class="a" style="left:770.3px;top:283.0px;width:20px;text-align:center;font-size:6.5px;line-height:8px;color:#b4b4b4">-48</div><div class="a" style="left:798.6px;top:218.5px;width:20px;text-align:center;font-size:6.5px;line-height:8px;color:#b4b4b4">+12</div><div class="a" style="left:798.6px;top:233.0px;width:20px;text-align:center;font-size:6.5px;line-height:8px;color:#b4b4b4">0</div><div class="a" style="left:798.6px;top:245.0px;width:20px;text-align:center;font-size:6.5px;line-height:8px;color:#b4b4b4">-12</div><div class="a" style="left:798.6px;top:257.0px;width:20px;text-align:center;font-size:6.5px;line-height:8px;color:#b4b4b4">-24</div><div class="a" style="left:798.6px;top:269.5px;width:20px;text-align:center;font-size:6.5px;line-height:8px;color:#b4b4b4">-36</div><div class="a" style="left:798.6px;top:283.0px;width:20px;text-align:center;font-size:6.5px;line-height:8px;color:#b4b4b4">-48</div><div class="a" style="left:826.9px;top:218.5px;width:20px;text-align:center;font-size:6.5px;line-height:8px;color:#b4b4b4">+12</div><div class="a" style="left:826.9px;top:233.0px;width:20px;text-align:center;font-size:6.5px;line-height:8px;color:#b4b4b4">0</div><div class="a" style="left:826.9px;top:245.0px;width:20px;text-align:center;font-size:6.5px;line-height:8px;color:#b4b4b4">-12</div><div class="a" style="left:826.9px;top:257.0px;width:20px;text-align:center;font-size:6.5px;line-height:8px;color:#b4b4b4">-24</div><div class="a" style="left:826.9px;top:269.5px;width:20px;text-align:center;font-size:6.5px;line-height:8px;color:#b4b4b4">-36</div><div class="a" style="left:826.9px;top:283.0px;width:20px;text-align:center;font-size:6.5px;line-height:8px;color:#b4b4b4">-48</div><div class="a" style="left:855.2px;top:218.5px;width:20px;text-align:center;font-size:6.5px;line-height:8px;color:#b4b4b4">+12</div><div class="a" style="left:855.2px;top:233.0px;width:20px;text-align:center;font-size:6.5px;line-height:8px;color:#b4b4b4">0</div><div class="a" style="left:855.2px;top:245.0px;width:20px;text-align:center;font-size:6.5px;line-height:8px;color:#b4b4b4">-12</div><div class="a" style="left:855.2px;top:257.0px;width:20px;text-align:center;font-size:6.5px;line-height:8px;color:#b4b4b4">-24</div><div class="a" style="left:855.2px;top:269.5px;width:20px;text-align:center;font-size:6.5px;line-height:8px;color:#b4b4b4">-36</div><div class="a" style="left:855.2px;top:283.0px;width:20px;text-align:center;font-size:6.5px;line-height:8px;color:#b4b4b4">-48</div><div class="a" style="left:883.5px;top:218.5px;width:20px;text-align:center;font-size:6.5px;line-height:8px;color:#b4b4b4">+12</div><div class="a" style="left:883.5px;top:233.0px;width:20px;text-align:center;font-size:6.5px;line-height:8px;color:#b4b4b4">0</div><div class="a" style="left:883.5px;top:245.0px;width:20px;text-align:center;font-size:6.5px;line-height:8px;color:#b4b4b4">-12</div><div class="a" style="left:883.5px;top:257.0px;width:20px;text-align:center;font-size:6.5px;line-height:8px;color:#b4b4b4">-24</div><div class="a" style="left:883.5px;top:269.5px;width:20px;text-align:center;font-size:6.5px;line-height:8px;color:#b4b4b4">-36</div><div class="a" style="left:883.5px;top:283.0px;width:20px;text-align:center;font-size:6.5px;line-height:8px;color:#b4b4b4">-48</div><div class="a" style="left:911.8px;top:218.5px;width:20px;text-align:center;font-size:6.5px;line-height:8px;color:#b4b4b4">+12</div><div class="a" style="left:911.8px;top:233.0px;width:20px;text-align:center;font-size:6.5px;line-height:8px;color:#b4b4b4">0</div><div class="a" style="left:911.8px;top:245.0px;width:20px;text-align:center;font-size:6.5px;line-height:8px;color:#b4b4b4">-12</div><div class="a" style="left:911.8px;top:257.0px;width:20px;text-align:center;font-size:6.5px;line-height:8px;color:#b4b4b4">-24</div><div class="a" style="left:911.8px;top:269.5px;width:20px;text-align:center;font-size:6.5px;line-height:8px;color:#b4b4b4">-36</div><div class="a" style="left:911.8px;top:283.0px;width:20px;text-align:center;font-size:6.5px;line-height:8px;color:#b4b4b4">-48</div><div class="a" style="left:764.0px;top:219px;width:6px;height:72px;background:#0c0c0c"></div><div class="a" style="left:792.3px;top:219px;width:6px;height:72px;background:#0c0c0c"></div><div class="a" style="left:820.6px;top:219px;width:6px;height:72px;background:#0c0c0c"></div><div class="a" style="left:848.9px;top:219px;width:6px;height:72px;background:#0c0c0c"></div><div class="a" style="left:877.2px;top:219px;width:6px;height:72px;background:#0c0c0c"></div><div class="a" style="left:905.5px;top:219px;width:6px;height:72px;background:#0c0c0c"></div><div class="sep" style="left:741px;top:296px;width:198px"></div><div class="hdr" style="left:741px;top:298.5px;font-size:11.5px;letter-spacing:0.6px">Link</div><div class="lb" style="left:775px;top:308.5px"></div><div class="lb" style="left:829px;top:308.5px"></div><div class="lb" style="left:887px;top:308.5px"></div><div class="sep" style="left:741px;top:332px;width:198px"></div><div class="hdr" style="left:741px;top:335.5px;font-size:11.5px;letter-spacing:1px">Mute</div><div class="mb" style="left:759.0px;top:352px"></div><div class="mb" style="left:787.3px;top:352px"></div><div class="mb" style="left:815.6px;top:352px"></div><div class="mb" style="left:843.9px;top:352px"></div><div class="mb" style="left:872.2px;top:352px"></div><div class="mb" style="left:900.5px;top:352px"></div><div class="sep" style="left:741px;top:378px;width:198px"></div><div class="hdr" style="left:741px;top:381px;font-size:11.5px;letter-spacing:0.9px">Phase Invert</div><div class="mb" style="left:760.0px;top:400px"></div><div class="mb" style="left:788.3px;top:400px"></div><div class="mb" style="left:816.6px;top:400px"></div><div class="mb" style="left:844.9px;top:400px"></div><div class="mb" style="left:873.2px;top:400px"></div><div class="mb" style="left:901.5px;top:400px"></div><div class="hdr" style="left:256.5px;top:421px;font-size:14px;letter-spacing:0.6px">Cross-Over</div><div class="sep" style="left:256px;top:438px;width:683px"></div><div class="num" style="left:279.7px;top:443px">1</div><div class="box" style="left:257px;top:463px"><b>Off</b></div><div class="dd" style="left:257px;top:486px"><b>L-R 24dB</b><i></i></div><div class="box" style="left:257px;top:514px"><b>184Hz</b></div><div class="dd" style="left:257px;top:536px"><b>L-R 24dB</b><i></i></div><div class="box" style="left:257px;top:562px"><b>0.00dB</b></div><div class="box" style="left:257px;top:585px"><b>0.0ms</b></div><div class="lt" style="left:348.2px;top:473px">H<br>P<br>F</div><div class="lt" style="left:348.2px;top:523px">L<br>P<br>F</div><div class="lt" style="left:348.2px;top:570.5px">G</div><div class="lt" style="left:348.2px;top:589.5px">D</div><div class="num" style="left:393.2px;top:443px">2</div><div class="box" style="left:371px;top:463px"><b>Off</b></div><div class="dd" style="left:371px;top:486px"><b>L-R 24dB</b><i></i></div><div class="box" style="left:371px;top:514px"><b>184Hz</b></div><div class="dd" style="left:371px;top:536px"><b>L-R 24dB</b><i></i></div><div class="box" style="left:371px;top:562px"><b>0.00dB</b></div><div class="box" style="left:371px;top:585px"><b>0.0ms</b></div><div class="lt" style="left:460.0px;top:473px">H<br>P<br>F</div><div class="lt" style="left:460.0px;top:523px">L<br>P<br>F</div><div class="lt" style="left:460.0px;top:570.5px">G</div><div class="lt" style="left:460.0px;top:589.5px">D</div><div class="num" style="left:506.1px;top:443px">3</div><div class="box" style="left:485px;top:463px"><b>181Hz</b></div><div class="dd" style="left:485px;top:486px"><b>L-R 24dB</b><i></i></div><div class="box" style="left:485px;top:514px"><b>3.49kHz</b></div><div class="dd" style="left:485px;top:536px"><b>L-R 24dB</b><i></i></div><div class="box" style="left:485px;top:562px"><b>0.00dB</b></div><div class="box" style="left:485px;top:585px"><b>0.0ms</b></div><div class="lt" style="left:575.5px;top:473px">H<br>P<br>F</div><div class="lt" style="left:575.5px;top:523px">L<br>P<br>F</div><div class="lt" style="left:575.5px;top:570.5px">G</div><div class="lt" style="left:575.5px;top:589.5px">D</div><div class="num" style="left:620.5px;top:443px">4</div><div class="box" style="left:599px;top:463px"><b>181Hz</b></div><div class="dd" style="left:599px;top:486px"><b>L-R 24dB</b><i></i></div><div class="box" style="left:599px;top:514px"><b>3.49kHz</b></div><div class="dd" style="left:599px;top:536px"><b>L-R 24dB</b><i></i></div><div class="box" style="left:599px;top:562px"><b>0.00dB</b></div><div class="box" style="left:599px;top:585px"><b>0.0ms</b></div><div class="lt" style="left:689.3px;top:473px">H<br>P<br>F</div><div class="lt" style="left:689.3px;top:523px">L<br>P<br>F</div><div class="lt" style="left:689.3px;top:570.5px">G</div><div class="lt" style="left:689.3px;top:589.5px">D</div><div class="num" style="left:734.0px;top:443px">5</div><div class="box" style="left:713px;top:463px"><b>3.49kHz</b></div><div class="dd" style="left:713px;top:486px"><b>L-R 24dB</b><i></i></div><div class="box" style="left:713px;top:514px"><b>Off</b></div><div class="dd" style="left:713px;top:536px"><b>L-R 24dB</b><i></i></div><div class="box" style="left:713px;top:562px"><b>0.00dB</b></div><div class="box" style="left:713px;top:585px"><b>0.0ms</b></div><div class="lt" style="left:803.8px;top:473px">H<br>P<br>F</div><div class="lt" style="left:803.8px;top:523px">L<br>P<br>F</div><div class="lt" style="left:803.8px;top:570.5px">G</div><div class="lt" style="left:803.8px;top:589.5px">D</div><div class="num" style="left:849.4px;top:443px">6</div><div class="box" style="left:827px;top:463px"><b>3.49kHz</b></div><div class="dd" style="left:827px;top:486px"><b>L-R 24dB</b><i></i></div><div class="box" style="left:827px;top:514px"><b>Off</b></div><div class="dd" style="left:827px;top:536px"><b>L-R 24dB</b><i></i></div><div class="box" style="left:827px;top:562px"><b>0.00dB</b></div><div class="box" style="left:827px;top:585px"><b>0.0ms</b></div></body></html>
